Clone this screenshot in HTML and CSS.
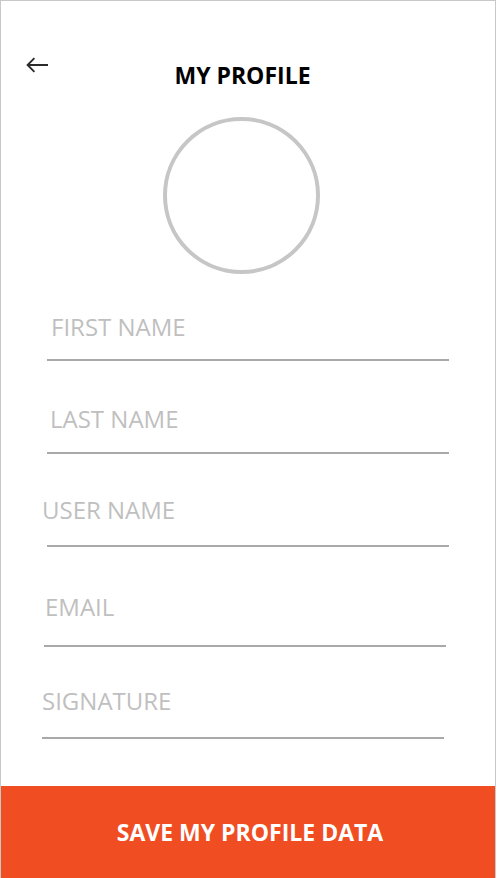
FILE: index.html
```html
<!DOCTYPE html>
<html lang="en">
<head>
<meta charset="utf-8">
<title>My Profile</title>
<link rel="stylesheet" href="styles.css">
</head>
<body>
<div class="screen">
  <header class="header">
    <button class="back-btn" aria-label="Back">
      <svg class="back-icon" width="22" height="18" viewBox="0 0 22 18" fill="none">
        <path d="M22 8H1.6M8.4 1.2L1.6 8L8.4 14.8" stroke="#2b2b2b" stroke-width="1.9" stroke-linecap="butt"/>
      </svg>
    </button>
    <h1 class="title">MY PROFILE</h1>
  </header>

  <div class="avatar-row">
    <div class="avatar"></div>
  </div>

  <form class="form">
    <label class="field field--first"><input class="field-input" type="text" placeholder="FIRST NAME"></label>
    <label class="field field--last"><input class="field-input" type="text" placeholder="LAST NAME"></label>
    <label class="field field--user"><input class="field-input" type="text" placeholder="USER NAME"></label>
    <label class="field field--email"><input class="field-input" type="email" placeholder="EMAIL"></label>
    <label class="field field--sign"><input class="field-input" type="text" placeholder="SIGNATURE"></label>
  </form>

  <button class="save-btn" type="button">SAVE MY PROFILE DATA</button>
</div>
</body>
</html>
```
FILE: styles.css
```css
html, body {
  margin: 0;
  padding: 0;
  background: #ffffff;
}

body {
  font-family: "Open Sans", "Noto Sans", sans-serif;
}

.screen {
  box-sizing: border-box;
  width: 496px;
  height: 878px;
  border: 1px solid #c8c8c8;
  border-bottom: 0;
  display: flex;
  flex-direction: column;
  overflow: hidden;
}

.header {
  display: grid;
  grid-template-columns: 22px 1fr 58px;
  align-items: start;
  padding: 56px 0 0 25px;
}

.back-btn {
  border: 0;
  background: none;
  padding: 0;
  margin: 0;
  width: 22px;
  height: 18px;
  cursor: pointer;
}

.back-icon {
  display: block;
}

.title {
  margin: 3px 0 0;
  text-align: center;
  font: 700 23px/30px "Open Sans", sans-serif;
  color: #000;
}

.avatar-row {
  display: flex;
  justify-content: center;
  padding-right: 14px;
  margin-top: 27px;
}

.avatar {
  box-sizing: border-box;
  width: 157px;
  height: 157px;
  border: 4px solid #c6c6c6;
  border-radius: 50%;
}

.form {
  display: flex;
  flex-direction: column;
  margin: 37px 0 0;
}

.field {
  display: block;
  width: 402px;
  border-bottom: 2px solid #a9a9a9;
}

.field-input {
  display: block;
  box-sizing: border-box;
  width: 100%;
  height: 32px;
  padding: 0;
  border: 0;
  outline: none;
  background: transparent;
  font: 400 24px/32px "Open Sans", sans-serif;
  color: #555;
}

.field-input::placeholder {
  color: #bfbfbf;
  opacity: 1;
}

.field--first { margin: 0 0 0 46px; padding-bottom: 16px; }
.field--first .field-input { margin-left: 4px; }

.field--last { margin: 42px 0 0 46px; padding-bottom: 17px; }
.field--last .field-input { margin-left: 3px; }

.field--user { margin: 40px 0 0 46px; padding-bottom: 19px; }
.field--user .field-input { margin-left: -5px; }

.field--email { margin: 44px 0 0 43px; padding-bottom: 22px; }
.field--email .field-input { margin-left: 1px; }

.field--sign { margin: 38px 0 0 41px; padding-bottom: 20px; }
.field--sign .field-input { margin-left: 0; }

.save-btn {
  margin-top: auto;
  height: 92px;
  width: 100%;
  padding: 0 0 0 4px;
  border: 0;
  background: #f04d23;
  color: #fff;
  font: 700 23px/30px "Open Sans", sans-serif;
  cursor: pointer;
}
```
